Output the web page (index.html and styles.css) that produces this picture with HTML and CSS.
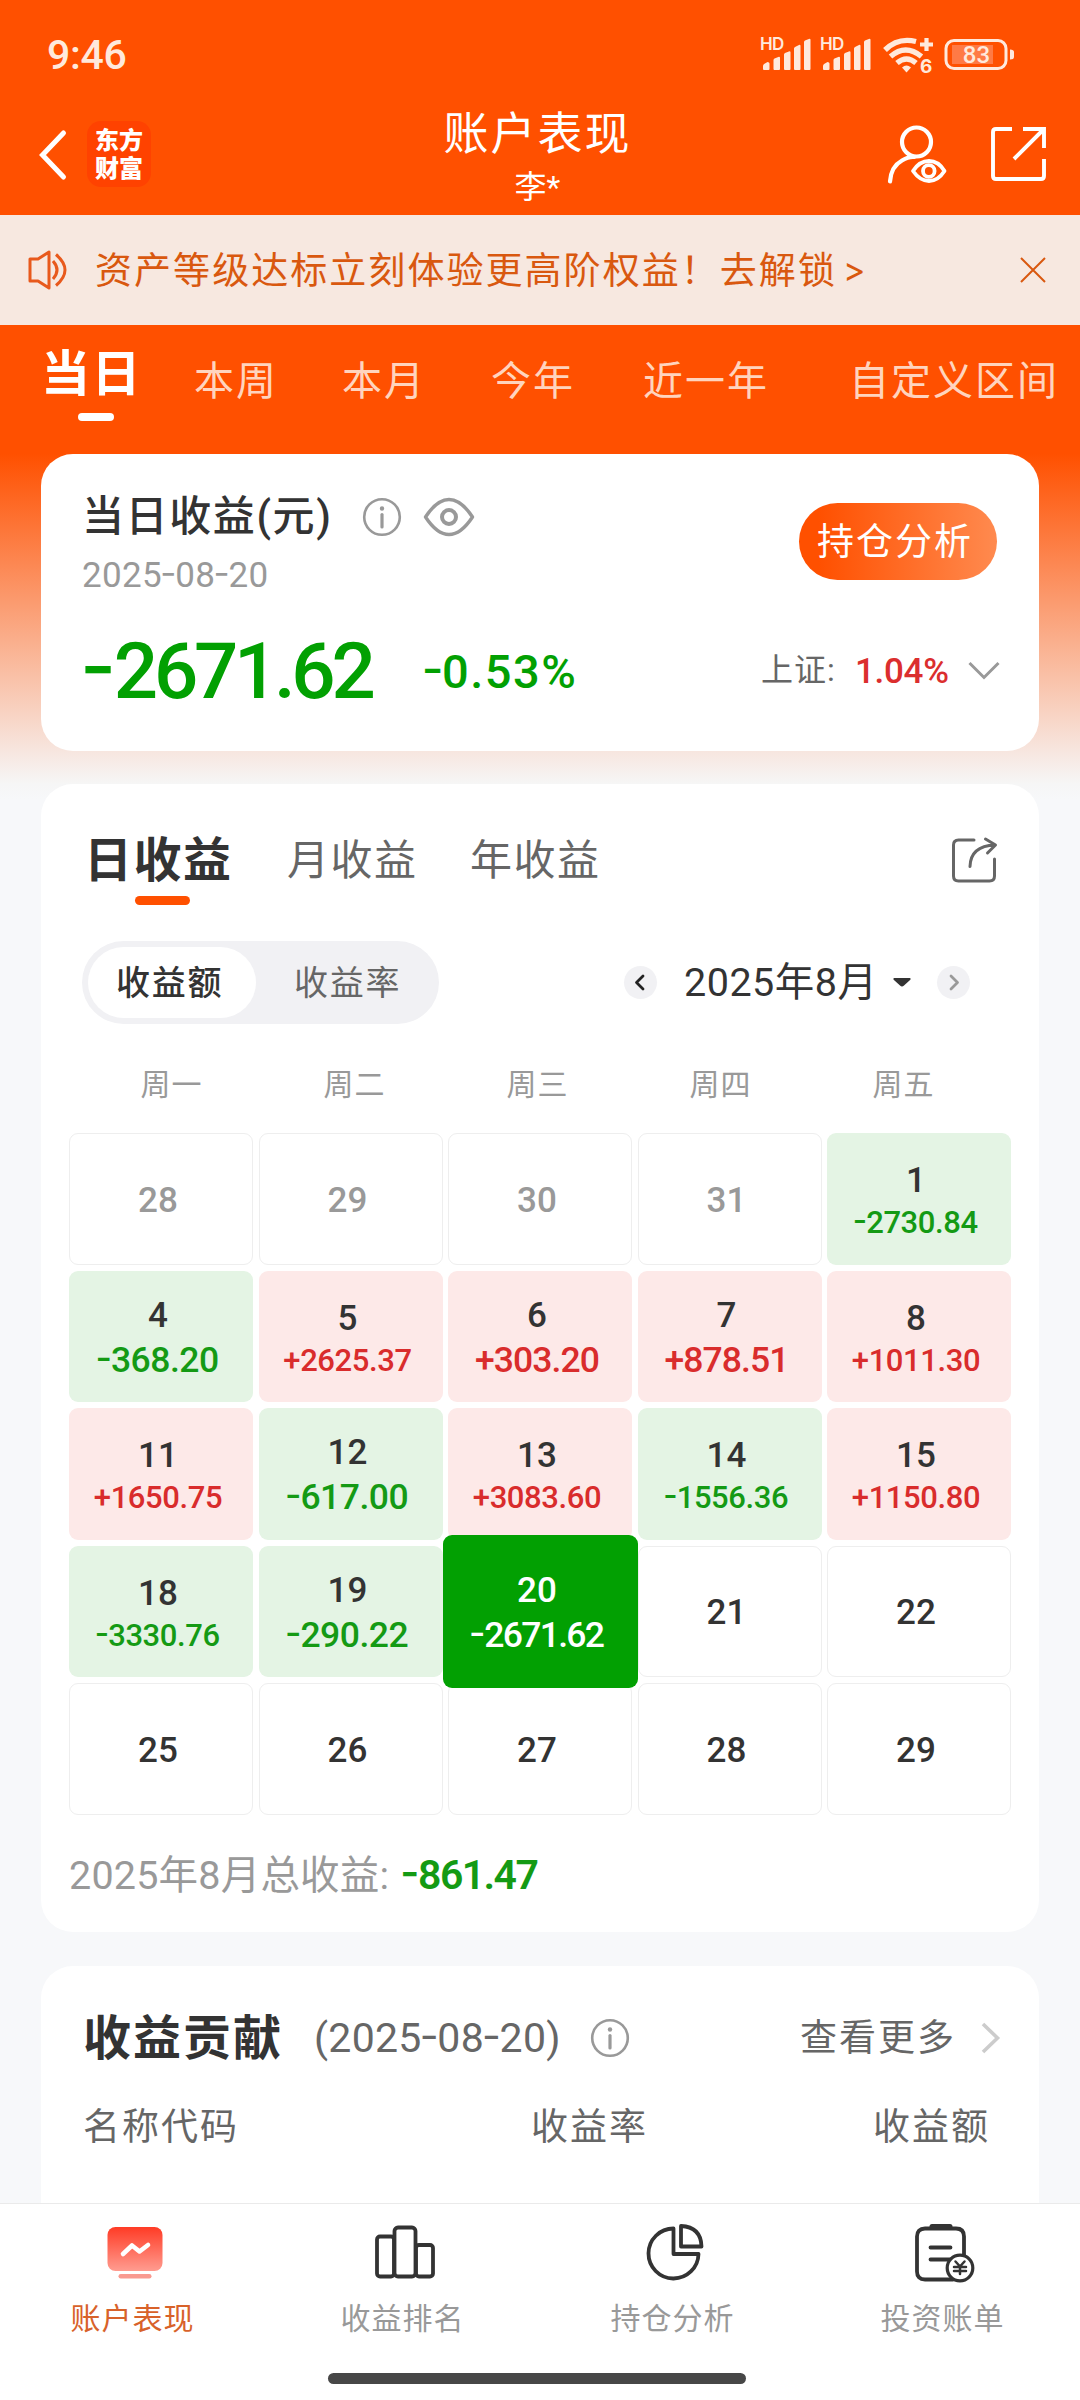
FILE: index.html
```html
<!DOCTYPE html>
<html lang="zh-CN">
<head>
<meta charset="utf-8">
<title>账户表现</title>
<link rel="stylesheet" href="styles.css">
</head>
<body>
<div class="page">
  <div class="status">
    <span class="time">9:46</span>
    <svg class="sysicons" viewBox="0 0 256 44" fill="#ffe9dc">
      <g id="sig">
        <text x="0" y="18.500" class="hd">HD</text>
        <path d="M3 38v-3q0-1.500 1.500-2.300l3-1.700q2 0 2 1.500V38q0 1-1 1H4q-1 0-1-1zM13.500 29q0-1 1-1.500l4.500-1.700q1 0 1 1V38q0 1-1 1h-4.500q-1 0-1-1zM24 23.500q0-1 1-1.500l4.500-1.700q1 0 1 1V38q0 1-1 1H25q-1 0-1-1zM34 17.500q0-1 1-1.500l4.500-2.200q1 0 1 1V38q0 1-1 1H35q-1 0-1-1zM44 11q0-1 1-1.500l4.500-1.700q1 0 1 1V38q0 1-1 1H45q-1 0-1-1z"/>
      </g>
      <use href="#sig" x="60"/>
      <g fill="none" stroke="#ffe9dc" stroke-width="5.400">
        <path d="M125 19Q138 6 156 10.500"/>
        <path d="M130.500 25.500q15-13 31 0"/>
        <path d="M137 32q9.500-8 19 0"/>
        <path d="M160 13.500h13M166.500 7v13" stroke-width="4.200"/>
      </g>
      <path d="M142 36.500q4.500-4 9 0l-4.500 5z"/>
      <text x="160" y="41.500" class="six">6</text>
      <rect x="192" y="14" width="41" height="19" fill="#ff7a45"/>
      <rect x="186" y="9.500" width="60" height="28" rx="8" fill="none" stroke="#ffe9dc" stroke-width="3"/>
      <path d="M250 18.500q4 0 4 2.500v5q0 2.500-4 2.500z"/>
      <text x="216.500" y="32" class="pct">83</text>
    </svg>
  </div>

  <header class="head">
    <div class="brand">
      <svg class="back" viewBox="0 0 30 52"><path d="M26.500 4 5.500 26 26.500 48" fill="none" stroke="#fff" stroke-width="5" stroke-linecap="round"/></svg>
      <div class="logo">东方<br>财富</div>
    </div>
    <div class="titles">
      <h1>账户表现</h1>
      <p>李*</p>
    </div>
    <div class="actions">
      <svg class="viewer" viewBox="0 0 62 62" fill="none" stroke="#fff" stroke-width="4.200">
        <circle cx="30.500" cy="18" r="14.500"/>
        <path d="M4 57.500q1-15 12-21 7-4 12-3.500" stroke-linecap="round"/>
        <path d="M27 47q6.500-10 16-10t15.500 10q-6.500 10-15.500 10T27 47z" stroke-width="3.800" stroke-linejoin="round"/>
        <circle cx="42.800" cy="47" r="5.800" stroke-width="3.800"/>
      </svg>
      <svg class="open" viewBox="0 0 58 58" fill="none" stroke="#fff" stroke-width="3.900">
        <path d="M23 4H7Q4 4 4 7v44q0 3 3 3h45q3 0 3-3V34M34 4h21v19M54 5 25 34"/>
      </svg>
    </div>
  </header>

  <div class="notice">
    <svg class="horn" viewBox="0 0 40 40" fill="none" stroke="#e8591c" stroke-width="3">
      <path d="M3 9h8L22 2v36l-11-7H3z" stroke-linejoin="round"/>
      <path d="M26 11q8 9 0 18M29 4.500q18 15.500 0 31"/>
    </svg>
    <span class="msg">资产等级达标立刻体验更高阶权益！去解锁</span>
    <span class="gt">&gt;</span>
    <svg class="close" viewBox="0 0 26 26"><path d="m1 1 24 24M25 1 1 25" stroke="#d9580f" stroke-width="2"/></svg>
  </div>

  <nav class="ranges">
    <b>当日</b><span>本周</span><span>本月</span><span>今年</span><span>近一年</span><span>自定义区间</span>
  </nav>

  <section class="card summary">
    <div class="sumtop">
      <div>
        <div class="sumtitle">
          <h2>当日收益(元)</h2>
          <svg class="info" viewBox="0 0 40 40"><circle cx="20" cy="20" r="17.800" fill="none" stroke="#999" stroke-width="2.600"/><circle cx="20" cy="11.500" r="2.200" fill="#999"/><path d="M20 17.500v12.500" stroke="#999" stroke-width="3.200" stroke-linecap="round"/></svg>
          <svg class="eye" viewBox="0 0 52 40" fill="none" stroke="#999" stroke-width="3.400"><path d="M2.500 20Q14 2.500 26 2.500T49.500 20Q38 37.500 26 37.500T2.500 20z" stroke-linejoin="round"/><circle cx="26" cy="20" r="7" stroke-width="4"/></svg>
        </div>
        <p class="date">2025<i>-</i>08<i>-</i>20</p>
      </div>
      <span class="btn">持仓分析</span>
    </div>
    <div class="figures">
      <span class="total"><i>-</i>2671.62</span>
      <span class="rate"><i>-</i>0.53%</span>
      <span class="idx">上证:</span>
      <span class="idxv">1.04%</span>
      <svg class="down" viewBox="0 0 32 20"><path d="M1.500 2 16 16.500 30.500 2" fill="none" stroke="#999" stroke-width="3"/></svg>
    </div>
  </section>

  <section class="card calendar">
    <div class="periods">
      <b>日收益</b><span>月收益</span><span>年收益</span>
      <svg class="share" viewBox="0 0 46 46" fill="none" stroke="#666" stroke-width="3" stroke-linecap="round" stroke-linejoin="round">
        <path d="M23 3H7.500Q2.500 3 2.500 8v31q0 5 5 5h31q5 0 5-5V22"/>
        <path d="M19 29.500Q19.500 9 44 8M34.500 2 44.500 8l-8 8"/>
      </svg>
    </div>
    <div class="controls">
      <div class="segment"><b>收益额</b><span>收益率</span></div>
      <div class="month">
        <svg class="step" viewBox="0 0 33 33"><circle cx="16.500" cy="16.500" r="16.500" fill="#f1f1f4"/><path d="m19 10-6.500 6.500L19 23" fill="none" stroke="#222" stroke-width="2.800" stroke-linecap="round" stroke-linejoin="round"/></svg>
        <span>2025年8月</span>
        <svg class="caret" viewBox="0 0 18 10"><path d="M1 0h16q1.500 1-.500 2.500L11 7.500Q9 9.500 7 7.500L1.500 2.500Q-.500 1 1 0z" fill="#333"/></svg>
        <svg class="step" viewBox="0 0 33 33"><circle cx="16.500" cy="16.500" r="16.500" fill="#f1f1f4"/><path d="m14 10 6.500 6.500L14 23" fill="none" stroke="#999" stroke-width="2.800" stroke-linecap="round" stroke-linejoin="round"/></svg>
      </div>
    </div>
    <div class="weekdays"><span>周一</span><span>周二</span><span>周三</span><span>周四</span><span>周五</span></div>
    <div class="grid">
      <div class="day out">28</div><div class="day out">29</div><div class="day out">30</div><div class="day out">31</div>
      <div class="day loss">1<em class="sm"><i>-</i>2730.84</em></div>

      <div class="day loss">4<em><i>-</i>368.20</em></div>
      <div class="day gain">5<em class="sm">+2625.37</em></div>
      <div class="day gain">6<em>+303.20</em></div>
      <div class="day gain">7<em>+878.51</em></div>
      <div class="day gain">8<em class="sm">+1011.30</em></div>

      <div class="day gain">11<em class="sm">+1650.75</em></div>
      <div class="day loss">12<em><i>-</i>617.00</em></div>
      <div class="day gain">13<em class="sm">+3083.60</em></div>
      <div class="day loss">14<em class="sm"><i>-</i>1556.36</em></div>
      <div class="day gain">15<em class="sm">+1150.80</em></div>

      <div class="day loss">18<em class="sm"><i>-</i>3330.76</em></div>
      <div class="day loss">19<em><i>-</i>290.22</em></div>
      <div class="day today">20<em><i>-</i>2671.62</em></div>
      <div class="day">21</div><div class="day">22</div>

      <div class="day">25</div><div class="day">26</div><div class="day">27</div><div class="day">28</div><div class="day">29</div>
    </div>
    <div class="sum">2025年8月总收益:<b><i>-</i>861.47</b></div>
  </section>

  <section class="card contrib">
    <div class="ctop">
      <h2>收益贡献</h2>
      <span class="cdate">(2025<i>-</i>08<i>-</i>20)</span>
      <svg class="info" viewBox="0 0 40 40"><circle cx="20" cy="20" r="17.800" fill="none" stroke="#999" stroke-width="2.600"/><circle cx="20" cy="11.500" r="2.200" fill="#999"/><path d="M20 17.500v12.500" stroke="#999" stroke-width="3.200" stroke-linecap="round"/></svg>
      <span class="more">查看更多</span>
      <svg class="right" viewBox="0 0 20 32"><path d="m2 2 14.500 14L2 30" fill="none" stroke="#ccc" stroke-width="3.600"/></svg>
    </div>
    <div class="cols"><span>名称代码</span><span>收益率</span><span>收益额</span></div>
  </section>

  <footer class="tabbar">
    <div class="tabs">
      <div class="tab on">
        <svg viewBox="0 0 64 64">
          <defs><linearGradient id="mon" x1="0" y1="0" x2="0" y2="1"><stop offset="0" stop-color="#ff3b25"/><stop offset="1" stop-color="#ff9c90"/></linearGradient></defs>
          <rect x="4.500" y="7" width="55" height="44" rx="8" fill="url(#mon)"/>
          <rect x="15.500" y="54" width="33" height="4.500" rx="2.200" fill="#f99a90"/>
          <path d="m20 34 9-8.500 7.500 6L45 25" fill="none" stroke="#fff" stroke-width="4.600" stroke-linecap="round" stroke-linejoin="round"/>
        </svg>
        <span>账户表现</span>
      </div>
      <div class="tab">
        <svg viewBox="0 0 64 64" fill="none" stroke="#333" stroke-width="3.800">
          <rect x="4" y="16.500" width="17" height="40" rx="3"/>
          <rect x="21.500" y="7.500" width="21" height="49" rx="3.500"/>
          <rect x="43" y="25" width="17" height="31.500" rx="3"/>
        </svg>
        <span>收益排名</span>
      </div>
      <div class="tab">
        <svg viewBox="0 0 64 64" fill="none" stroke="#333" stroke-width="3.800" stroke-linejoin="round">
          <path d="M30.500 8.500A25 25 0 1 0 55.500 34h-25z"/>
          <path d="M38 6v20.500h20.500Q58 7 38 6z"/>
        </svg>
        <span>持仓分析</span>
      </div>
      <div class="tab">
        <svg viewBox="0 0 64 64" fill="none" stroke="#333" stroke-width="3.800" stroke-linecap="round">
          <path d="M40 59.500H12q-8 0-8-8V16.500q0-8 8-8h31q8 0 8 8V36"/>
          <path d="M19 6.500h18" stroke-width="5"/>
          <path d="M17.500 27.500h20M17.500 39.500h20"/>
          <circle cx="47" cy="48" r="12.800" fill="#fff" stroke-width="3.200"/>
          <path d="m42.500 41.500 4.500 5 4.500-5M47 46.500V54M41 47h12M41 51h12" stroke-width="2.500"/>
        </svg>
        <span>投资账单</span>
      </div>
    </div>
    <div class="homebar"></div>
  </footer>
</div>
</body>
</html>
```
FILE: styles.css
```css
* { box-sizing: border-box; margin: 0; padding: 0; }
body {
  font-family: Roboto, "Noto Sans CJK SC", sans-serif;
  color: #333;
  background: #f7f8fa;
}
svg { display: block; flex: none; overflow: visible; }
span, b { white-space: nowrap; }
i { font-family: Inter, sans-serif; font-style: normal; font-feature-settings: "case"; line-height: 0; margin: 0 -.03em 0 -.05em; letter-spacing: 0; }

.page {
  width: 1080px;
  height: 2400px;
  overflow: hidden;
  display: flex;
  flex-direction: column;
  background: linear-gradient(#ff5000 454px, #f7e6df 751px, #f6f6f6 784px, #f7f8fa 800px);
}

/* status bar */
.status { height: 110px; padding: 29px 64px 0 47px; display: flex; justify-content: space-between; }
.time { font-size: 41px; line-height: 52px; font-weight: 500; color: #ffe9dc; letter-spacing: -.300px; }
.sysicons { width: 256px; height: 44px; margin-top: 2px; }
.hd { font: 600 17px Inter, sans-serif; letter-spacing: -.800px; }
.six { font: 700 19px Inter, sans-serif; }
.pct { font: 500 24px Roboto, sans-serif; text-anchor: middle; }

/* title bar */
.head { height: 105px; display: grid; grid-template-columns: 300px 1fr 300px; }
.brand { display: flex; padding: 11px 0 0 37px; }
.back { width: 30px; height: 52px; margin-top: 8px; }
.logo {
  width: 64px; height: 66px; margin-left: 20px; padding: 6px 0 0 8px;
  border-radius: 14px; background: #ff4200; color: #fff;
  font-size: 24px; line-height: 28px; font-weight: 900;
}
.titles { text-align: center; color: #fff; padding-right: 5px; }
.titles h1 { font-size: 45px; line-height: 50px; font-weight: 400; letter-spacing: 2px; }
.titles p { font-size: 32px; line-height: 54px; }
.actions { display: flex; padding: 14px 0 0 106px; }
.viewer { width: 62px; height: 62px; }
.open { width: 58px; height: 58px; margin: 1px 0 0 41px; }

/* notice */
.notice { height: 110px; background: #f7e8e0; display: flex; align-items: center; padding: 0 34px 0 27px; color: #d9580f; }
.horn { width: 40px; height: 40px; }
.msg { margin-left: 28px; padding-top: 3px; font-size: 37px; line-height: 50px; letter-spacing: 2.050px; }
.gt { margin-left: 6px; font: 400 34px/50px Inter, sans-serif; }
.close { width: 26px; height: 26px; margin-left: auto; }

/* range tabs */
.ranges {
  height: 129px; padding: 26px 0 0 41px;
  display: grid; grid-template-columns: 153px 148px 149px 152px 206px auto;
  font-size: 40px; line-height: 62px; letter-spacing: 2px; color: #ffd4be;
}
.ranges b { font-size: 49px; line-height: 48px; letter-spacing: 1.500px; color: #fff; position: relative; }
.ranges b::after { content: ""; position: absolute; left: 37px; top: 62px; width: 36px; height: 8px; border-radius: 4px; background: #fff; }

/* cards */
.card { margin: 0 41px; border-radius: 32px; background: #fff; flex: none; }
.summary { height: 297px; }
.sumtop { display: flex; justify-content: space-between; padding: 35px 42px 0 41px; }
.sumtitle { display: flex; align-items: center; height: 56px; }
.sumtitle h2 { font-size: 42px; line-height: 56px; font-weight: 500; letter-spacing: 1.600px; width: 280px; }
.info { width: 40px; height: 40px; }
.eye { width: 52px; height: 40px; margin-left: 21px; }
.date { font-size: 35px; line-height: 44px; margin-top: 9px; color: #999; letter-spacing: .300px; }
.btn {
  width: 198px; height: 77px; margin-top: 14px; padding-left: 18px; border-radius: 39px;
  background: linear-gradient(90deg, #ff5000 10%, #ff8a4f);
  color: #fff; font-size: 37px; line-height: 79px; letter-spacing: 2px;
}
.figures { display: flex; align-items: center; height: 88px; margin: 29px 39px 0 43px; color: #02a002; font-weight: 500; }
.total { font-size: 78px; width: 340px; letter-spacing: -4.300px; }
.rate { font-size: 47px; letter-spacing: 1.500px; }
.idx { margin-left: auto; width: 94px; font-size: 32px; line-height: 40px; padding-bottom: 2px; font-weight: 400; color: #666; letter-spacing: 1px; }
.idxv { width: 113px; font-size: 35px; color: #db2e2e; letter-spacing: -.300px; }
.down { width: 32px; height: 20px; }

/* calendar card */
.calendar { height: 1148px; margin-top: 33px; }
.periods { display: flex; padding: 49px 42px 0 43px; height: 157px; font-size: 42px; line-height: 55px; letter-spacing: 1.500px; color: #666; }
.periods b { width: 203px; font-size: 48px; letter-spacing: 1.500px; color: #333; position: relative; }
.periods b::after { content: ""; position: absolute; left: 51px; top: 63px; width: 55px; height: 9px; border-radius: 5px; background: #ff5000; }
.periods span { width: 183px; }
.share { width: 46px; height: 46px; margin: 4px 0 0 auto; }
.controls { display: flex; justify-content: space-between; padding: 0 69px 0 41px; height: 83px; }
.segment { width: 357px; height: 83px; padding: 6px; border-radius: 42px; background: #f1f1f4; display: flex; font-size: 34px; line-height: 73px; letter-spacing: 1.700px; color: #666; }
.segment b { width: 168px; border-radius: 36px; background: #fff; color: #333; font-weight: 500; padding-left: 28px; }
.segment span { padding-left: 38px; }
.month { display: flex; align-items: center; font-size: 39.500px; }
.month span { margin: 0 17px 0 27px; width: 192px; line-height: 50px; letter-spacing: .500px; }
.step { width: 33px; height: 33px; }
.caret { width: 18px; height: 10px; margin-right: 26px; }
.weekdays { display: grid; grid-template-columns: repeat(5, 183px); padding: 36px 0 0 39px; font-size: 30px; line-height: 50px; letter-spacing: 1px; text-align: center; color: #999; }
.grid { display: grid; grid-template-columns: repeat(5, 184px); grid-auto-rows: 131.500px; column-gap: 5.500px; row-gap: 6px; padding: 23px 0 0 28px; }
.day {
  display: flex; flex-direction: column; align-items: center; justify-content: center;
  padding: 3px 6px 0 0; border: 1px solid #eee; border-radius: 9px;
  font-size: 35px; line-height: 45px; font-weight: 500;
}
.day em { font-style: normal; font-size: 35.500px; letter-spacing: -.500px; }
.day.gain em { letter-spacing: -.900px; }
.day em.sm { font-size: 31px; line-height: 39px; letter-spacing: -.400px; }
.out { color: #999; }
.loss { background: #e4f4e4; border-color: transparent; }
.loss em { color: #149a14; }
.gain { background: #fde9e8; border-color: transparent; }
.gain em { color: #d92c2c; }
.today { margin: -11px -5.500px; border: 0; background: #02a002; color: #fff; z-index: 1; }
.day.today em { letter-spacing: -1.700px; }
.sum { padding: 35px 0 0 28px; font-size: 39.500px; line-height: 50px; color: #999; letter-spacing: .200px; }
.sum b { margin-left: 13px; font-size: 41px; font-weight: 600; color: #149a14; letter-spacing: -1.600px; }

/* contribution card */
.contrib { height: 237px; margin-top: 34px; padding-top: 42px; border-radius: 32px 32px 0 0; }
.ctop { display: flex; align-items: center; height: 60px; padding: 0 38px 0 42px; }
.ctop h2 { width: 231px; font-size: 48px; line-height: 60px; padding-top: 2px; letter-spacing: 2px; font-weight: 700; }
.cdate { width: 276px; font-size: 41px; line-height: 60px; color: #666; letter-spacing: .300px; }
.more { margin-left: auto; padding-top: 2px; font-size: 37px; line-height: 60px; letter-spacing: 2px; color: #666; margin-right: 25px; }
.right { width: 20px; height: 32px; }
.cols { display: grid; grid-template-columns: 448px 342px auto; padding: 35px 0 0 42px; font-size: 37px; line-height: 50px; letter-spacing: 2px; color: #666; }

/* bottom bar */
.tabbar { height: 197px; background: #fff; border-top: 1px solid #eaeaea; flex: none; }
.tabs { display: grid; grid-template-columns: repeat(4, 270px); height: 169px; padding-top: 16px; }
.tab { display: flex; flex-direction: column; align-items: center; color: #999; font-size: 30px; line-height: 40px; letter-spacing: 1px; }
.tab svg { width: 64px; height: 64px; }
.tab span { margin: 15px 5px 0 0; }
.on { color: #d8622a; }
.homebar { width: 418px; height: 11px; margin-left: 328px; border-radius: 6px; background: #474747; }
```
